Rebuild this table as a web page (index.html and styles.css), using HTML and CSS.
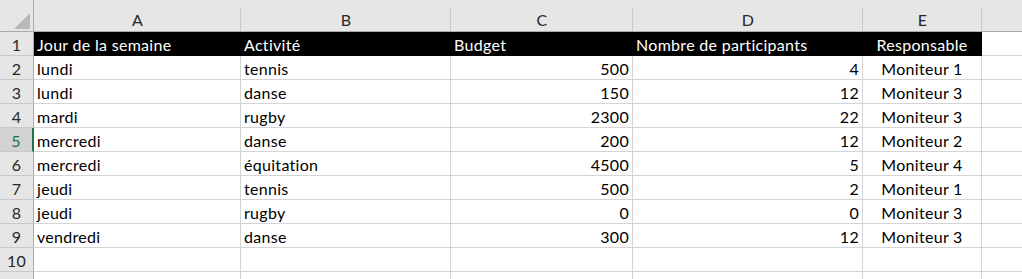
FILE: index.html
```html
<!DOCTYPE html>
<html lang="fr">
<head>
<meta charset="utf-8">
<title>Feuille</title>
<link rel="stylesheet" href="styles.css">
</head>
<body>
<div class="sheet">
  <div class="corner"><svg width="18" height="17" viewBox="0 0 18 17"><polygon points="17,0 17,16 1,16" fill="#b9b9b9"/></svg></div>
  <div class="colh">A</div><div class="colh">B</div><div class="colh">C</div><div class="colh">D</div><div class="colh">E</div><div class="colh last"></div>

  <div class="rowh">1</div>
  <div class="c th">Jour de la semaine</div><div class="c th">Activité</div><div class="c th">Budget</div><div class="c th">Nombre de participants</div><div class="c th mid">Responsable</div><div class="c f"></div>

  <div class="rowh">2</div>
  <div class="c">lundi</div><div class="c">tennis</div><div class="c num">500</div><div class="c num">4</div><div class="c mid">Moniteur 1</div><div class="c f"></div>

  <div class="rowh">3</div>
  <div class="c">lundi</div><div class="c">danse</div><div class="c num">150</div><div class="c num">12</div><div class="c mid">Moniteur 3</div><div class="c f"></div>

  <div class="rowh">4</div>
  <div class="c">mardi</div><div class="c">rugby</div><div class="c num">2300</div><div class="c num">22</div><div class="c mid">Moniteur 3</div><div class="c f"></div>

  <div class="rowh sel">5</div>
  <div class="c">mercredi</div><div class="c">danse</div><div class="c num">200</div><div class="c num">12</div><div class="c mid">Moniteur 2</div><div class="c f"></div>

  <div class="rowh">6</div>
  <div class="c">mercredi</div><div class="c">équitation</div><div class="c num">4500</div><div class="c num">5</div><div class="c mid">Moniteur 4</div><div class="c f"></div>

  <div class="rowh">7</div>
  <div class="c">jeudi</div><div class="c">tennis</div><div class="c num">500</div><div class="c num">2</div><div class="c mid">Moniteur 1</div><div class="c f"></div>

  <div class="rowh">8</div>
  <div class="c">jeudi</div><div class="c">rugby</div><div class="c num">0</div><div class="c num">0</div><div class="c mid">Moniteur 3</div><div class="c f"></div>

  <div class="rowh">9</div>
  <div class="c">vendredi</div><div class="c">danse</div><div class="c num">300</div><div class="c num">12</div><div class="c mid">Moniteur 3</div><div class="c f"></div>

  <div class="rowh">10</div>
  <div class="c"></div><div class="c"></div><div class="c"></div><div class="c"></div><div class="c"></div><div class="c f"></div>

  <div class="rowh">11</div>
  <div class="c"></div><div class="c"></div><div class="c"></div><div class="c"></div><div class="c"></div><div class="c f"></div>
</div>
</body>
</html>
```

FILE: styles.css
```css
html, body {
  margin: 0;
  padding: 0;
  background: #ffffff;
  overflow: hidden;
}

.sheet {
  display: grid;
  grid-template-columns: 34px 207px 210px 182px 230px 119px 1fr;
  grid-template-rows: 32px repeat(11, 24px);
  font-family: Lato, "Open Sans", sans-serif;
  font-size: 16px;
  letter-spacing: 0.3px;
  color: #000;
  width: 1022px;
}

.corner {
  background: #e6e6e6;
  border-right: 1px solid #ababab;
  border-bottom: 1px solid #ababab;
  box-sizing: border-box;
  display: flex;
  align-items: flex-end;
  justify-content: flex-end;
  padding: 0 2px 1px 0;
}

.corner svg {
  display: block;
}

.colh {
  background-color: #e6e6e6;
  background-image: linear-gradient(#c8c8c8, #c8c8c8);
  background-repeat: no-repeat;
  background-position: right bottom;
  background-size: 1px 23px;
  border-bottom: 1px solid #ababab;
  box-sizing: border-box;
  display: flex;
  align-items: flex-end;
  justify-content: center;
  padding-bottom: 2px;
  color: #262626;
}

.colh.last {
  background-image: none;
}

.rowh {
  background: #e6e6e6;
  border-right: 1px solid #ababab;
  border-bottom: 1px solid #c8c8c8;
  box-sizing: border-box;
  display: flex;
  align-items: center;
  justify-content: center;
  color: #262626;
  padding-top: 1px;
}

.rowh.sel {
  background: #d2d2d2;
  color: #217346;
  border-right: 2px solid #217346;
}

.c {
  border-right: 1px solid #d4d4d4;
  border-bottom: 1px solid #d4d4d4;
  box-sizing: border-box;
  padding: 1px 3px 0 3px;
  display: flex;
  align-items: center;
  white-space: nowrap;
  overflow: hidden;
}

.c.th {
  background: #000;
  color: #fff;
  border-color: #000;
}

.c.num {
  justify-content: flex-end;
}

.c.mid {
  justify-content: center;
}

.c.f {
  border-right: none;
}
```
